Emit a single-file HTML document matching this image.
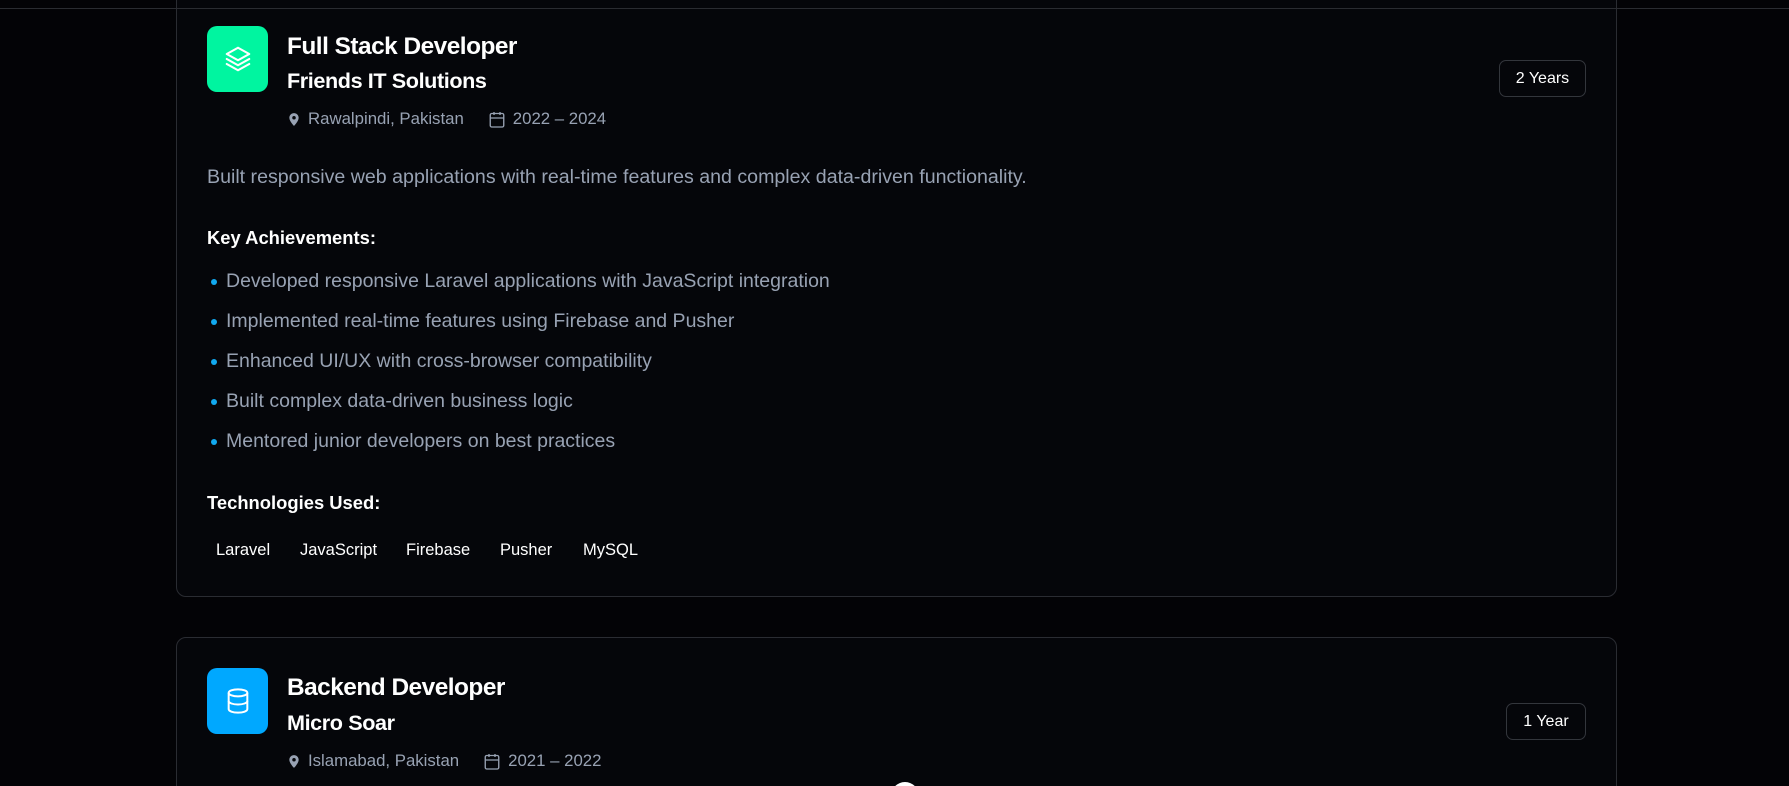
<!DOCTYPE html>
<html style="width:1789px;height:786px;overflow:hidden"><head><meta charset="utf-8"><style>
*{margin:0;padding:0;box-sizing:border-box}
body{width:1789px;height:786px;overflow:hidden;background:#030306;font-family:"Liberation Sans",sans-serif;position:relative;color:#fff}
.topline{position:absolute;left:0;top:8px;width:1789px;height:1px;background:#2a2c31;z-index:2}
.card{position:absolute;left:176px;width:1441px;border:1px solid #2a2c32;border-radius:10px;background:#05060a}
.icon{position:absolute;left:30px;width:61px;height:66px;border-radius:10px;display:flex;align-items:center;justify-content:center}
.t{position:absolute;left:110px;font-size:24.4px;font-weight:bold;letter-spacing:-0.5px}
.c{position:absolute;left:110px;font-size:21.6px;font-weight:bold;letter-spacing:-0.4px}
.meta{position:absolute;left:110px;font-size:16.8px;color:#98a2b3;display:flex;align-items:center}
.meta svg{margin-right:7px}
.badge{position:absolute;border:1px solid #33363c;border-radius:7px;font-size:16px;display:flex;align-items:center;justify-content:center;height:37px}
.p{position:absolute;left:30px;font-size:19.6px;color:#98a2b3;white-space:nowrap}
.h{position:absolute;left:30px;font-size:18.4px;font-weight:bold}
.li{position:absolute;left:30px;font-size:19.5px;color:#98a2b3}
.li:before{content:"";position:absolute;left:4px;top:-3px;width:6px;height:6px;border-radius:50%;background:#11a9f0}
.li span{position:absolute;left:19px;top:-12px;white-space:nowrap}
.tag{position:absolute;font-size:16.5px}
</style></head><body>
<div class="topline"></div>
<div class="card" style="top:-20px;height:617px">
  <div class="icon" style="top:45px;background:#00f5a0">
    <svg width="30" height="30" viewBox="0 0 24 24" fill="none" stroke="#fff" stroke-width="1.7" stroke-linejoin="round" stroke-linecap="round"><path d="M12 3 21 8 12 13 3 8z"/><path d="M3 12l9 5 9-5"/><path d="M3 16l9 5 9-5"/></svg>
  </div>
  <div class="t" style="top:52px">Full Stack Developer</div>
  <div class="c" style="top:87px">Friends IT Solutions</div>
  <div class="meta" style="top:128px">
    <svg width="14" height="17" viewBox="0 0 24 24" fill="#98a2b3"><path d="M12 1C7.6 1 4 4.5 4 9c0 6 8 14 8 14s8-8 8-14c0-4.5-3.6-8-8-8zm0 11a3 3 0 110-6 3 3 0 010 6z"/></svg>
    <span style="margin-right:24px">Rawalpindi, Pakistan</span>
    <svg width="18" height="19" viewBox="0 0 24 24" fill="none" stroke="#98a2b3" stroke-width="1.8"><rect x="3" y="4" width="18" height="18" rx="2"/><path d="M16 2v4M8 2v4M3 10h18"/></svg>
    <span>2022 – 2024</span>
  </div>
  <div class="badge" style="left:1322px;top:79px;width:87px">2 Years</div>
  <div class="p" style="top:185px">Built responsive web applications with real-time features and complex data-driven functionality.</div>
  <div class="h" style="top:246px">Key Achievements:</div>
  <div class="li" style="top:301px"><span>Developed responsive Laravel applications with JavaScript integration</span></div>
  <div class="li" style="top:341px"><span>Implemented real-time features using Firebase and Pusher</span></div>
  <div class="li" style="top:381px"><span>Enhanced UI/UX with cross-browser compatibility</span></div>
  <div class="li" style="top:421px"><span>Built complex data-driven business logic</span></div>
  <div class="li" style="top:461px"><span>Mentored junior developers on best practices</span></div>
  <div class="h" style="top:511px">Technologies Used:</div>
  <div class="tag" style="left:39px;top:560px">Laravel</div>
  <div class="tag" style="left:123px;top:560px">JavaScript</div>
  <div class="tag" style="left:229px;top:560px">Firebase</div>
  <div class="tag" style="left:323px;top:560px">Pusher</div>
  <div class="tag" style="left:406px;top:560px">MySQL</div>
</div>
<div class="card" style="top:637px;height:160px">
  <div class="icon" style="top:30px;background:#00a8ff">
    <svg width="28" height="28" viewBox="0 0 24 24" fill="none" stroke="#fff" stroke-width="1.7"><ellipse cx="12" cy="5" rx="8" ry="3"/><path d="M4 5v14c0 1.7 3.6 3 8 3s8-1.3 8-3V5"/><path d="M4 12c0 1.7 3.6 3 8 3s8-1.3 8-3"/></svg>
  </div>
  <div class="t" style="top:36px">Backend Developer</div>
  <div class="c" style="top:72px">Micro Soar</div>
  <div class="meta" style="top:113px">
    <svg width="14" height="17" viewBox="0 0 24 24" fill="#98a2b3"><path d="M12 1C7.6 1 4 4.5 4 9c0 6 8 14 8 14s8-8 8-14c0-4.5-3.6-8-8-8zm0 11a3 3 0 110-6 3 3 0 010 6z"/></svg>
    <span style="margin-right:24px">Islamabad, Pakistan</span>
    <svg width="18" height="19" viewBox="0 0 24 24" fill="none" stroke="#98a2b3" stroke-width="1.8"><rect x="3" y="4" width="18" height="18" rx="2"/><path d="M16 2v4M8 2v4M3 10h18"/></svg>
    <span>2021 – 2022</span>
  </div>
  <div class="badge" style="left:1329px;top:65px;width:80px">1 Year</div>
</div>
<div style="position:absolute;left:891px;top:782px;width:28px;height:8px;overflow:hidden"><div style="width:28px;height:28px;border-radius:50%;background:#fff"></div></div>
</body></html>
